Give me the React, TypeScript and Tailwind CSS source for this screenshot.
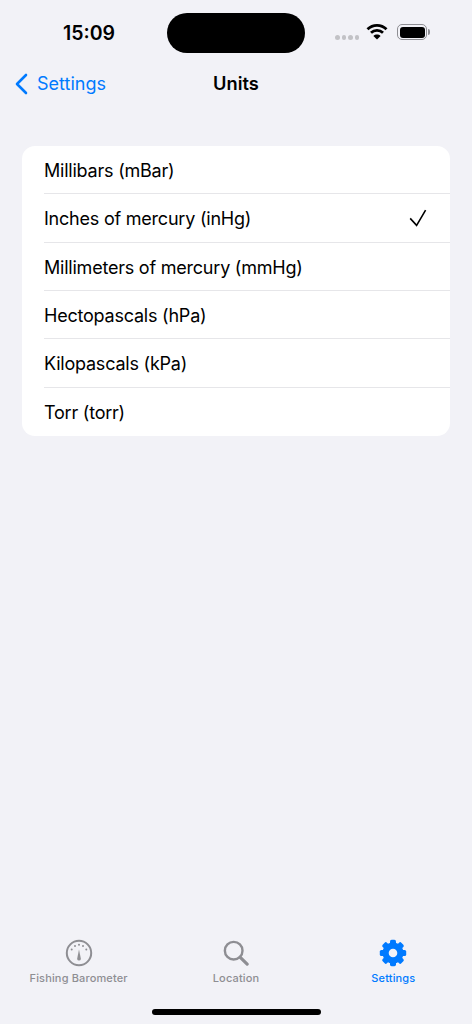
const OPTIONS = [
  "Millibars (mBar)",
  "Inches of mercury (inHg)",
  "Millimeters of mercury (mmHg)",
  "Hectopascals (hPa)",
  "Kilopascals (kPa)",
  "Torr (torr)",
];

function Wifi() {
  return (
    <svg width="22" height="17" viewBox="0 0 22 17" fill="none" stroke="#000" strokeWidth="2.8">
      <path d="M1.5 6.2C6.8 1 15.2 1 20.5 6.2" />
      <path d="M5 9.8C8.3 6.6 13.7 6.6 17 9.8" />
      <path d="M11 16.5L7.4 13C9.4 11.1 12.6 11.1 14.6 13Z" fill="#000" stroke="none" />
    </svg>
  );
}

function Battery() {
  return (
    <div className="flex items-center">
      <div className="w-[30px] h-[16px] rounded-[5px] border-[1.5px] border-[#8e8e93] p-[1.5px]">
        <div className="w-full h-full rounded-[3px] bg-black" />
      </div>
      <div className="w-[2px] h-[6px] rounded-r-[2px] bg-[#8e8e93] ml-[1px]" />
    </div>
  );
}

function Gauge() {
  return (
    <svg width="28" height="28" viewBox="0 0 28 28" fill="none">
      <circle cx="14" cy="14" r="12.2" stroke="#8e8e93" strokeWidth="2" />
      <path d="M14 10.5L15.9 20A1.95 1.95 0 0 1 12.1 20Z" fill="#8e8e93" />
      <g fill="#8e8e93">
        <circle cx="14" cy="5.7" r="1" />
        <circle cx="10" cy="7" r="1" />
        <circle cx="18" cy="7" r="1" />
        <circle cx="6.7" cy="10.4" r="1" />
        <circle cx="21.3" cy="10.4" r="1" />
      </g>
    </svg>
  );
}

function Search() {
  return (
    <svg width="26" height="26" viewBox="0 0 28 28" fill="none" stroke="#8e8e93">
      <circle cx="11.5" cy="11.5" r="9.5" strokeWidth="2.6" />
      <path d="M18.6 18.6L26 26" strokeWidth="3.4" strokeLinecap="round" />
    </svg>
  );
}

function Gear() {
  const teeth = [0, 45, 90, 135, 180, 225, 270, 315];
  return (
    <svg width="28" height="28" viewBox="0 0 28 28">
      <g fill="#007aff">
        {teeth.map((a) => (
          <rect key={a} x="11" y="0.8" width="6" height="6.5" rx="1.6" transform={`rotate(${a} 14 14)`} />
        ))}
      </g>
      <circle cx="14" cy="14" r="7.4" fill="none" stroke="#007aff" strokeWidth="6.2" />
    </svg>
  );
}

function Tab({ icon, label, active }: { icon: React.ReactNode; label: string; active?: boolean }) {
  return (
    <div className="flex-1 flex flex-col items-center">
      <div className="h-[28px] flex items-center justify-center">{icon}</div>
      <span className={`mt-[4px] text-[11px] leading-[14px] font-medium tracking-[0.15px] ${active ? "text-[#007aff]" : "text-[#8e8e93]"}`}>
        {label}
      </span>
    </div>
  );
}

export default function App() {
  return (
    <div className="w-[472px] h-[1024px] flex flex-col bg-[#f2f2f7] text-black overflow-hidden font-['Inter','Liberation_Sans',sans-serif]">
      <div className="h-[66px] pt-[13px] flex items-start">
        <div className="w-[167px] h-[40px] flex items-center justify-center pl-[11px]">
          <span className="text-[19.5px] leading-[38px] font-semibold">15:09</span>
        </div>
        <div className="w-[138px] h-[40px] rounded-full bg-black" />
        <div className="flex-1 h-[38px] flex items-center pl-[30px]">
          <div className="flex gap-[2px] mt-[11px]">
            <span className="w-[4.5px] h-[4.5px] rounded-full bg-[#c2c2c6]" />
            <span className="w-[4.5px] h-[4.5px] rounded-full bg-[#c2c2c6]" />
            <span className="w-[4.5px] h-[4.5px] rounded-full bg-[#c2c2c6]" />
            <span className="w-[4.5px] h-[4.5px] rounded-full bg-[#c2c2c6]" />
          </div>
          <div className="ml-[7px] mb-[1px]">
            <Wifi />
          </div>
          <div className="ml-[9px]">
            <Battery />
          </div>
        </div>
      </div>

      <div className="h-[36px] grid grid-cols-[1fr_auto_1fr] items-center">
        <div className="flex items-center pl-[15px] text-[#007aff]">
          <svg width="13" height="22" viewBox="0 0 13 22" fill="none" stroke="#007aff" strokeWidth="2.6" strokeLinecap="round" strokeLinejoin="round">
            <path d="M11 2L2 11L11 20" />
          </svg>
          <span className="ml-[9px] mb-[1px] text-[18px] leading-[24px]">Settings</span>
        </div>
        <span className="mb-[2px] text-[18.3px] leading-[24px] font-semibold">Units</span>
        <div />
      </div>

      <div className="mt-[44px] mx-[22px] rounded-[13px] bg-white overflow-hidden">
        {OPTIONS.map((label, i) => (
          <div key={label} className="h-[48.33px] pl-[22px] flex">
            <div className={`flex-1 flex items-center pr-[23px] ${i < OPTIONS.length - 1 ? "border-b border-[#e6e6e9] pt-[3px]" : "pt-[2px]"}`}>
              <span className="flex-1 text-[18px] tracking-[-0.22px] leading-[24px]">{label}</span>
              {i === 1 && (
                <svg width="18" height="18" viewBox="0 0 18 18" fill="none" stroke="#000" strokeWidth="1.6" className="-mt-[2px]">
                  <path d="M1.2 9.4L7.6 16.4L16.6 1.2" />
                </svg>
              )}
            </div>
          </div>
        ))}
      </div>

      <div className="flex-1" />

      <div className="h-[70px] flex">
        <Tab icon={<Gauge />} label="Fishing Barometer" />
        <Tab icon={<Search />} label="Location" />
        <Tab icon={<Gear />} label="Settings" active />
      </div>

      <div className="h-[15px] flex justify-center">
        <div className="w-[169px] h-[6px] rounded-full bg-black" />
      </div>
    </div>
  );
}
